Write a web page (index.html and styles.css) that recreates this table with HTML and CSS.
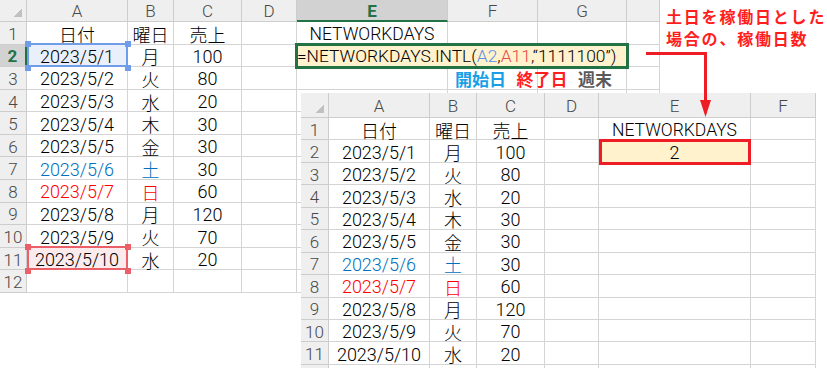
FILE: index.html
```html
<!DOCTYPE html>
<html lang="ja">
<head>
    <meta charset="UTF-8">
    <meta name="viewport" content="width=device-width, initial-scale=1.0">
    <title>NETWORKDAYS.INTL</title>
    <link rel="stylesheet" href="styles.css">
</head>
<body>
    <div class="board">
        <!-- sheet while the formula is being typed -->
        <div class="sheet sheet-edit" id="sheet-edit"></div>

        <div class="arg-labels">
            <span class="lbl-start">開始日</span>
            <span class="lbl-end">終了日</span>
            <span class="lbl-weekend">週末</span>
        </div>

        <div class="note">土日を稼働日とした<br>場合の、稼働日数</div>

        <!-- sheet after Enter -->
        <div class="sheet sheet-result" id="sheet-result"></div>

        <svg class="arrow" width="827" height="368" viewBox="0 0 827 368">
            <path d="M646 53.5 H705.5 V104" fill="none" stroke="#ee1c24" stroke-width="3"/>
            <polygon points="700,100 711,100 705.5,117" fill="#ee1c24"/>
        </svg>
    </div>

    <script>
        const sales = [
            { date: '2023/5/1', day: '月', amount: 100 },
            { date: '2023/5/2', day: '火', amount: 80 },
            { date: '2023/5/3', day: '水', amount: 20 },
            { date: '2023/5/4', day: '木', amount: 30 },
            { date: '2023/5/5', day: '金', amount: 30 },
            { date: '2023/5/6', day: '土', amount: 30, tone: 'sat' },
            { date: '2023/5/7', day: '日', amount: 60, tone: 'sun' },
            { date: '2023/5/8', day: '月', amount: 120 },
            { date: '2023/5/9', day: '火', amount: 70 },
            { date: '2023/5/10', day: '水', amount: 20 }
        ];

        // A/B/C columns shared by both sheets
        function baseCells() {
            const cells = {
                A1: { text: '日付' },
                B1: { text: '曜日' },
                C1: { text: '売上' },
                E1: { text: 'NETWORKDAYS', cls: 'latin' }
            };
            sales.forEach((row, i) => {
                const r = i + 2;
                cells['A' + r] = { text: row.date, cls: row.tone };
                cells['B' + r] = { text: row.day, cls: row.tone };
                cells['C' + r] = { text: row.amount };
            });
            return cells;
        }

        function makeCell(cls, content, isHtml) {
            const div = document.createElement('div');
            div.className = 'cell ' + cls;
            if (content !== undefined) {
                if (isHtml) div.innerHTML = content;
                else div.textContent = content;
            }
            return div;
        }

        // cols: header labels ('' for a column whose letter is off-screen)
        function buildSheet(id, cols, rowCount, cells, selCol, selRow, lastLabel) {
            const sheet = document.getElementById(id);
            sheet.appendChild(makeCell('corner'));
            cols.forEach(c => {
                sheet.appendChild(makeCell('col-head' + (c.key === selCol ? ' selected' : ''), c.label));
            });
            for (let r = 1; r <= rowCount; r++) {
                const label = r <= lastLabel ? r : '';
                sheet.appendChild(makeCell('row-head' + (r === selRow ? ' selected' : ''), label));
                let skip = 0;
                cols.forEach(c => {
                    if (skip > 0) { skip--; return; }
                    const data = cells[c.key + r] || {};
                    const div = makeCell('data ' + (data.cls || ''), data.html || data.text, !!data.html);
                    if (data.span) {
                        div.style.gridColumn = 'span ' + data.span;
                        skip = data.span - 1;
                    }
                    sheet.appendChild(div);
                });
            }
        }

        const colsOf = keys => keys.map(k => ({ key: k, label: k }));

        const editCells = baseCells();
        editCells.A2.cls = 'ref-start';
        editCells.A11.cls = 'ref-end';
        editCells.E2 = {
            html: '=NETWORKDAYS.INTL(<span class="f-start">A2</span>,<span class="f-end">A11</span>,“1111100”)',
            cls: 'formula',
            span: 3
        };
        const editCols = colsOf(['A', 'B', 'C', 'D', 'E', 'F', 'G']).concat({ key: 'H', label: '' });
        buildSheet('sheet-edit', editCols, 12, editCells, 'E', 2, 12);

        const resultCells = baseCells();
        resultCells.E2 = { text: '2', cls: 'result' };
        buildSheet('sheet-result', colsOf(['A', 'B', 'C', 'D', 'E', 'F']), 12, resultCells, null, null, 11);
    </script>
</body>
</html>
```

FILE: styles.css
```css
body {
    margin: 0;
    background: #ffffff;
    font-family: Roboto, "Noto Sans CJK JP", sans-serif;
    color: #000000;
}

.board {
    position: relative;
    width: 827px;
    height: 368px;
    overflow: hidden;
}

/* Spreadsheet grid */
.sheet {
    display: grid;
    background: #ffffff;
}

.sheet-edit {
    width: 660px;
    grid-template-columns: 27px 101px 46px 68px 55px 151px 90px 89px 33px;
    grid-template-rows: 22px;
    grid-auto-rows: 22.58px;
}

.sheet-result {
    position: absolute;
    left: 301px;
    top: 93px;
    width: 515px;
    height: 275px;
    overflow: hidden;
    grid-template-columns: 28px 101px 47px 68px 54px 152px 65px;
    grid-template-rows: 25px;
    grid-auto-rows: 22.45px;
}

.cell {
    box-sizing: border-box;
    display: flex;
    align-items: center;
    justify-content: center;
    white-space: nowrap;
    border-right: 1px solid #d4d4d4;
    border-bottom: 1px solid #d4d4d4;
}

.data {
    font-size: 18px;
    font-weight: 300;
    padding-top: 2px;
}

.latin {
    font-size: 17.5px;
}

.corner,
.col-head,
.row-head {
    background: #efefef;
    color: #484848;
    font-size: 17px;
    font-weight: 300;
    border-color: #cdcdcd;
}

.corner {
    position: relative;
}

.corner::after {
    content: "";
    position: absolute;
    right: 4px;
    bottom: 4px;
    width: 9px;
    height: 9px;
    background: linear-gradient(to bottom right, transparent 50%, #c0c0c0 50%);
}

.col-head {
    padding-top: 1px;
}

.row-head {
    padding-top: 2px;
}

.col-head.selected {
    background: #d2d2d2;
    color: #217346;
    font-weight: bold;
    border-bottom: 2px solid #217346;
}

.row-head.selected {
    background: #d2d2d2;
    color: #217346;
    font-weight: bold;
    border-right: 2px solid #217346;
}

.sat {
    color: #0070c0;
}

.sun {
    color: #ff0000;
}

/* Range references shown while editing */
.ref-start,
.ref-end {
    position: relative;
    z-index: 2;
}

.ref-start {
    background: #e9effb;
}

.ref-end {
    background: #fcebec;
}

.ref-start::before,
.ref-end::before {
    content: "";
    position: absolute;
    left: 0;
    top: -2px;
    right: -1px;
    bottom: -1px;
    border: 2px solid #6f9de8;
}

.ref-end::before {
    border-color: #eb6068;
}

.ref-start::after,
.ref-end::after {
    content: "";
    position: absolute;
    left: -2px;
    top: -4px;
    width: 6px;
    height: 6px;
    background: #6f9de8;
    box-shadow: 100px 0 0 #6f9de8, 0 24px 0 #6f9de8, 100px 24px 0 #6f9de8;
}

.ref-end::after {
    background: #eb6068;
    box-shadow: 100px 0 0 #eb6068, 0 24px 0 #eb6068, 100px 24px 0 #eb6068;
}

.formula {
    position: relative;
    z-index: 1;
    justify-content: flex-start;
    font-size: 17.4px;
    background: #fff2cc;
    outline: 3px solid #217346;
    outline-offset: -1px;
}

.f-start {
    color: #5b8ee6;
}

.f-end {
    color: #e64a4a;
}

.result {
    position: relative;
    background: #fff2cc;
}

.result::before {
    content: "";
    position: absolute;
    left: 0;
    top: -1px;
    right: -1px;
    bottom: -3px;
    border: 3px solid #ee1c24;
}

/* Argument captions under the formula */
.arg-labels {
    position: absolute;
    left: 455px;
    top: 67px;
    display: flex;
    gap: 10.5px;
    font-family: "Noto Sans CJK JP", sans-serif;
    font-size: 17px;
    font-weight: bold;
    line-height: 23px;
}

.lbl-start {
    color: #1a9fe6;
}

.lbl-end {
    color: #ff1f1f;
}

.lbl-weekend {
    color: #595959;
}

.note {
    position: absolute;
    left: 666px;
    top: 5px;
    font-family: "Noto Sans CJK JP", sans-serif;
    font-size: 16px;
    font-weight: bold;
    line-height: 22px;
    letter-spacing: 1.8px;
    white-space: nowrap;
    color: #ff1e1e;
}

.arrow {
    position: absolute;
    left: 0;
    top: 0;
    pointer-events: none;
}
```
